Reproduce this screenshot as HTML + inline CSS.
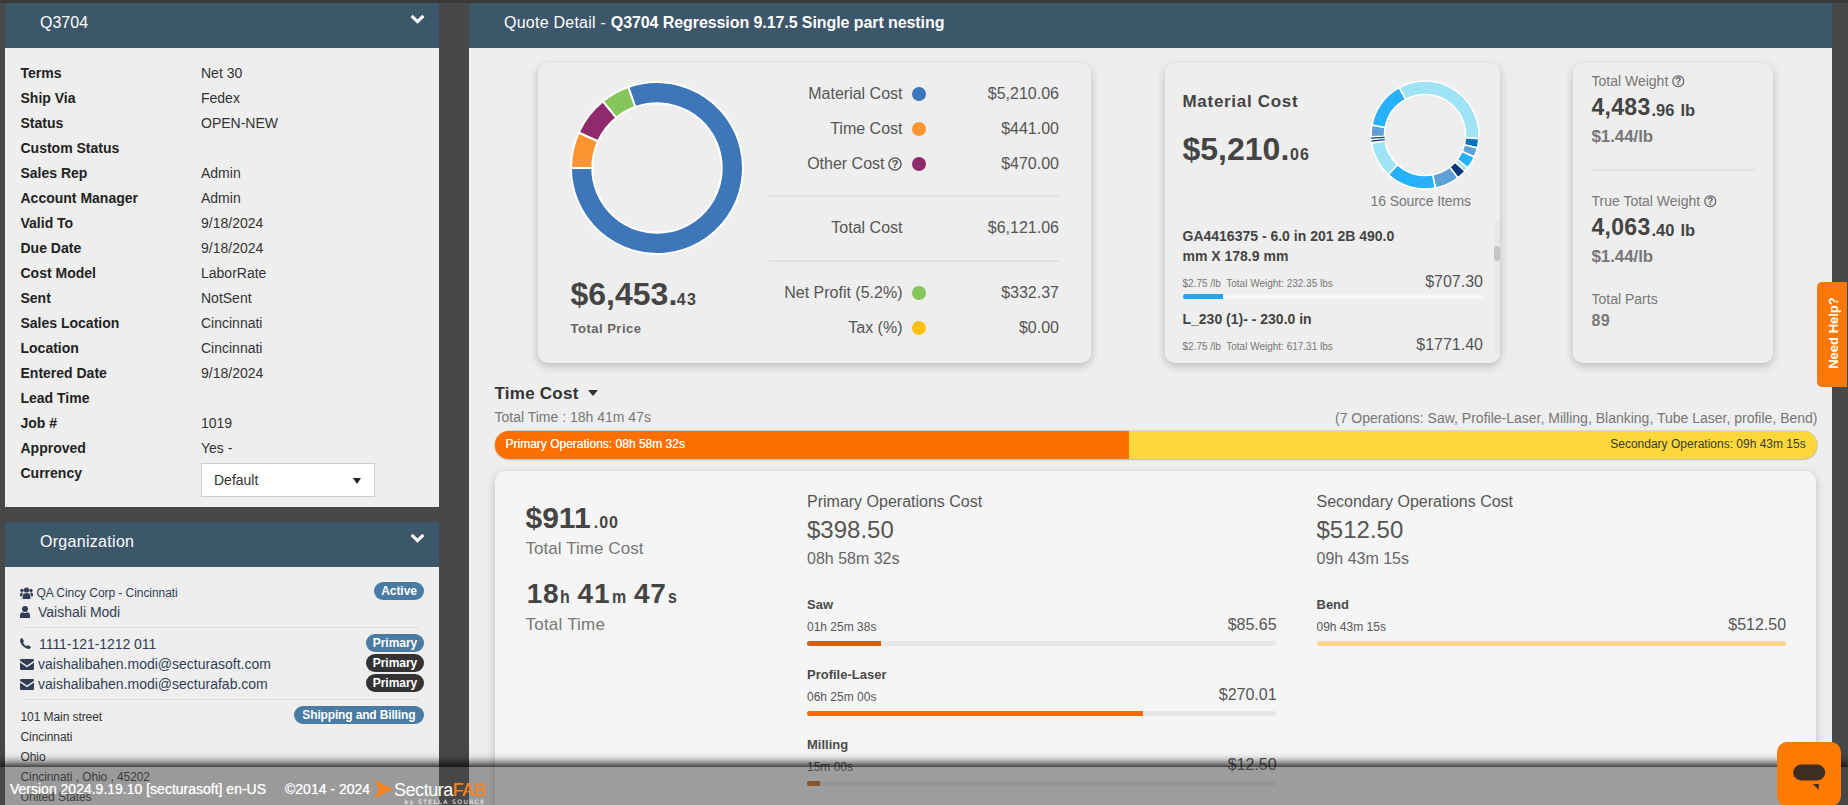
<!DOCTYPE html>
<html lang="en">
<head>
<meta charset="utf-8">
<title>Quote Detail - Q3704</title>
<style>
*{box-sizing:border-box;margin:0;padding:0}
html,body{width:1848px;height:805px;overflow:hidden}
body{background:#484848;font-family:"Liberation Sans",Arial,sans-serif;font-size:14px;color:#333;position:relative}
.abs{position:absolute}
#topstrip{position:absolute;left:0;top:0;width:1848px;height:3px;background:#3a3a3a}
.panel{position:absolute;background:#eee;overflow:hidden}
.phead{position:absolute;left:0;top:0;right:0;height:45px;background:#3c566a;color:#fff;font-size:16px;line-height:20px}
.phead .ttl{position:absolute;left:35px;top:10px;white-space:nowrap}
.chev{position:absolute;right:14px;top:11px;width:15px;height:10px}
/* left panel */
#lp{left:5px;top:3px;width:434px;height:504px}
#lp .row{position:absolute;left:0;width:434px;height:25px;font-size:14px;line-height:25px;white-space:nowrap}
#lp .row b{position:absolute;left:15.5px;top:0;font-size:14px;color:#222}
#lp .row span{position:absolute;left:196px;top:0;color:#333}
#cur{position:absolute;left:196px;top:460px;width:174px;height:34px;background:#fff;border:1px solid #ccc;font-size:14px;line-height:32px;padding-left:12px;color:#333}
#cur i{position:absolute;right:13px;top:14px;width:0;height:0;border-left:4px solid transparent;border-right:4px solid transparent;border-top:6px solid #222}
/* org panel */
#op{left:5px;top:522px;width:434px;height:283px}
.badge{position:absolute;height:17px;border-radius:9px;background:#4a7ba3;color:#fff;font-size:12px;font-weight:bold;line-height:17px;padding:0 6.8px;white-space:nowrap;letter-spacing:-.05px}
.badge.dk{background:#333}
.oline{position:absolute;white-space:nowrap;color:#2f3e55}
.hr{position:absolute;height:1px;background:#ddd}
/* main */
#mp{left:469px;top:3px;width:1363px;height:802px}
.card{position:absolute;background:#eee;border-radius:10px;box-shadow:0 3px 10px rgba(0,0,0,.22)}
.t{position:absolute;white-space:nowrap}
.r{text-align:right}
.dot{position:absolute;width:14px;height:14px;border-radius:50%}
#footer{position:absolute;left:0;top:766.5px;width:1848px;height:39px;background:rgba(70,70,70,.5);box-shadow:0 -1px 10px 2px rgba(0,0,0,1);color:#fff;font-size:14px;line-height:18px;z-index:50;text-shadow:0 0 1px rgba(255,255,255,.75)}
#logo{font-size:18px;line-height:24px;letter-spacing:-.45px;text-shadow:none}
#logosub{font-size:6px;line-height:7px;letter-spacing:1.42px;text-shadow:none;font-family:"DejaVu Sans","Liberation Sans",sans-serif}
#mc{position:absolute;left:-469px;top:-3px;width:1848px;height:805px}
.hr2{position:absolute;height:2px;background:#e2e2e2}
.pbar{position:absolute;border-radius:3px;overflow:hidden}
.pbar i{position:absolute;left:0;top:0;bottom:0;display:block}
#help{position:absolute;left:1817px;top:281.5px;width:30px;height:105px;background:#fc7805;border-radius:5px 0 0 5px;z-index:40}
#help span{position:absolute;left:-19.5px;top:43.5px;width:72px;height:16px;line-height:16px;text-align:center;transform:rotate(-90deg);color:#fff;font-weight:bold;font-size:13px;white-space:nowrap}
#chat{position:absolute;left:1777px;top:742px;width:64px;height:64px;border-radius:10px;background:#ff7a00;z-index:60}
</style>
</head>
<body>
<div id="topstrip"></div>

<!-- LEFT: quote info -->
<div class="panel" id="lp">
  <div class="phead"><span class="ttl">Q3704</span>
    <svg class="chev" viewBox="0 0 15 10"><path d="M1.6 1.9 L7.5 7.6 L13.4 1.9" fill="none" stroke="#fff" stroke-width="3.1"/></svg>
  </div>
  <div class="row" style="top:58px"><b>Terms</b><span>Net 30</span></div>
  <div class="row" style="top:83px"><b>Ship Via</b><span>Fedex</span></div>
  <div class="row" style="top:108px"><b>Status</b><span>OPEN-NEW</span></div>
  <div class="row" style="top:133px"><b>Custom Status</b><span></span></div>
  <div class="row" style="top:158px"><b>Sales Rep</b><span>Admin</span></div>
  <div class="row" style="top:183px"><b>Account Manager</b><span>Admin</span></div>
  <div class="row" style="top:208px"><b>Valid To</b><span>9/18/2024</span></div>
  <div class="row" style="top:233px"><b>Due Date</b><span>9/18/2024</span></div>
  <div class="row" style="top:258px"><b>Cost Model</b><span>LaborRate</span></div>
  <div class="row" style="top:283px"><b>Sent</b><span>NotSent</span></div>
  <div class="row" style="top:308px"><b>Sales Location</b><span>Cincinnati</span></div>
  <div class="row" style="top:333px"><b>Location</b><span>Cincinnati</span></div>
  <div class="row" style="top:358px"><b>Entered Date</b><span>9/18/2024</span></div>
  <div class="row" style="top:383px"><b>Lead Time</b><span></span></div>
  <div class="row" style="top:408px"><b>Job #</b><span>1019</span></div>
  <div class="row" style="top:433px"><b>Approved</b><span>Yes -</span></div>
  <div class="row" style="top:458px"><b>Currency</b></div>
  <div id="cur">Default<i></i></div>
</div>

<!-- LEFT: organization -->
<div class="panel" id="op">
  <div class="phead"><span class="ttl" style="letter-spacing:.3px">Organization</span>
    <svg class="chev" viewBox="0 0 15 10"><path d="M1.6 1.9 L7.5 7.6 L13.4 1.9" fill="none" stroke="#fff" stroke-width="3.1"/></svg>
  </div>
  <svg class="abs" style="left:15px;top:65px" width="13" height="12" viewBox="0 0 13 12"><g fill="#2f3e55"><circle cx="6.5" cy="3" r="2.6"/><circle cx="2" cy="3.4" r="1.7"/><circle cx="11" cy="3.4" r="1.7"/><path d="M2.6 12 L2.6 9.2 Q2.6 6.2 5 6.2 L8 6.2 Q10.4 6.2 10.4 9.2 L10.4 12 Z"/><path d="M0 9.2 L0 7.4 Q0 5.6 1.6 5.6 L3 5.6 Q2 6.8 2 9.2 Z"/><path d="M13 9.2 L13 7.4 Q13 5.6 11.4 5.6 L10 5.6 Q11 6.8 11 9.2 Z"/></g></svg>
  <div class="oline" style="left:31.5px;top:63px;font-size:12px;line-height:16px;letter-spacing:-.06px">QA Cincy Corp - Cincinnati</div>
  <div class="badge" style="left:369px;top:60px;height:18px;line-height:18px;padding:0 7.2px">Active</div>
  <svg class="abs" style="left:15px;top:84px" width="10" height="12" viewBox="0 0 10 12"><g fill="#2f3e55"><circle cx="5" cy="3" r="3"/><path d="M0 12 L0 9.6 Q0 6.4 2.6 6.2 Q5 7.6 7.4 6.2 Q10 6.4 10 9.6 L10 12 Z"/></g></svg>
  <div class="oline" style="left:33px;top:81px;font-size:14px;line-height:18px">Vaishali Modi</div>
  <div class="hr" style="left:20px;width:394px;top:105px"></div>
  <svg class="abs" style="left:15px;top:116px" width="11" height="11" viewBox="0 0 11 11"><path fill="#2f3e55" d="M2.3 0.3 L3.9 3 Q4 3.4 3.6 3.8 L2.9 4.5 Q4.2 7 6.6 8.2 L7.4 7.4 Q7.8 7.1 8.2 7.3 L10.7 8.8 Q11 9.1 10.8 9.5 Q10 11 8.4 11 Q4.6 10.6 1.6 6.6 Q-0.2 3.8 0.1 2.2 Q0.4 0.6 1.7 0.1 Q2.1 0 2.3 0.3 Z"/></svg>
  <div class="oline" style="left:34px;top:113px;font-size:14px;line-height:18px;letter-spacing:-.05px">1111-121-1212 011</div>
  <div class="badge" style="left:361px;top:112px;height:18px;line-height:18px">Primary</div>
  <svg class="abs" style="left:15px;top:137px" width="14" height="11" viewBox="0 0 14 11"><g fill="#2f3e55"><path d="M0 1.2 Q0 0 1.2 0 L12.8 0 Q14 0 14 1.2 L14 1.8 L7 6.6 L0 1.8 Z"/><path d="M0 3.4 L7 8.2 L14 3.4 L14 9.8 Q14 11 12.8 11 L1.2 11 Q0 11 0 9.8 Z"/></g></svg>
  <div class="oline" style="left:33px;top:133px;font-size:14px;line-height:18px">vaishalibahen.modi@secturasoft.com</div>
  <div class="badge dk" style="left:361px;top:132px;height:18px;line-height:18px">Primary</div>
  <svg class="abs" style="left:15px;top:157px" width="14" height="11" viewBox="0 0 14 11"><g fill="#2f3e55"><path d="M0 1.2 Q0 0 1.2 0 L12.8 0 Q14 0 14 1.2 L14 1.8 L7 6.6 L0 1.8 Z"/><path d="M0 3.4 L7 8.2 L14 3.4 L14 9.8 Q14 11 12.8 11 L1.2 11 Q0 11 0 9.8 Z"/></g></svg>
  <div class="oline" style="left:33px;top:153px;font-size:14px;line-height:18px">vaishalibahen.modi@secturafab.com</div>
  <div class="badge dk" style="left:361px;top:152px;height:18px;line-height:18px">Primary</div>
  <div class="hr" style="left:20px;width:394px;top:177px"></div>
  <div class="oline" style="left:15.5px;top:187px;font-size:12px;line-height:16px;letter-spacing:-.08px;color:#333">101 Main street</div>
  <div class="badge" style="left:289px;top:184px;height:18px;line-height:18px;padding:0 8.35px;letter-spacing:-.15px">Shipping and Billing</div>
  <div class="oline" style="left:15.5px;top:207px;font-size:12px;line-height:16px;letter-spacing:-.08px;color:#333">Cincinnati</div>
  <div class="oline" style="left:15.5px;top:227px;font-size:12px;line-height:16px;letter-spacing:-.08px;color:#333">Ohio</div>
  <div class="oline" style="left:15.5px;top:247px;font-size:12px;line-height:16px;letter-spacing:-.08px;color:#333">Cincinnati , Ohio , 45202</div>
  <div class="oline" style="left:15.5px;top:267px;font-size:12px;line-height:16px;letter-spacing:-.08px;color:#333">United States</div>
</div>

<!-- MAIN -->
<div class="panel" id="mp">
  <div class="phead"><span class="ttl" style="letter-spacing:.24px">Quote Detail - <b style="letter-spacing:-.08px">Q3704 Regression 9.17.5 Single part nesting</b></span></div>
<!--MAINSTART-->
<div id="mc">
<div class="card" style="left:538px;top:63px;width:553px;height:300px"></div>
<svg class="abs" style="left:569.4px;top:80px" width="176" height="176" viewBox="-88 -88 176 176">
<path d="M-28.85 -81.02 A86 86 0 1 1 -86.00 -0.15 L-64.70 -0.11 A64.7 64.7 0 1 0 -21.70 -60.95 Z" fill="#3d76b9" stroke="#fff" stroke-width="2" stroke-linejoin="round"/>
<path d="M-86.00 -0.15 A86 86 0 0 1 -78.32 -35.53 L-58.92 -26.73 A64.7 64.7 0 0 0 -64.70 -0.11 Z" fill="#fe9532" stroke="#fff" stroke-width="2" stroke-linejoin="round"/>
<path d="M-78.32 -35.53 A86 86 0 0 1 -54.12 -66.83 L-40.72 -50.28 A64.7 64.7 0 0 0 -58.92 -26.73 Z" fill="#8f2a6c" stroke="#fff" stroke-width="2" stroke-linejoin="round"/>
<path d="M-54.12 -66.83 A86 86 0 0 1 -28.85 -81.02 L-21.70 -60.95 A64.7 64.7 0 0 0 -40.72 -50.28 Z" fill="#85c559" stroke="#fff" stroke-width="2" stroke-linejoin="round"/>
</svg>
<div class="t" style="top:278.11px;font-size:32px;line-height:32px;color:#444;font-weight:bold;left:570.50px;">$6,453.</div>
<div class="t" style="top:291.66px;font-size:16px;line-height:16px;color:#444;font-weight:bold;left:676.80px;letter-spacing:1.2px;">43</div>
<div class="t" style="top:321.60px;font-size:13px;line-height:13px;color:#666;font-weight:bold;left:570.50px;letter-spacing:.5px;">Total Price</div>
<div class="t" style="top:85.66px;font-size:16px;line-height:16px;color:#555;right:945.50px;">Material Cost</div>
<div class="t" style="top:85.66px;font-size:16px;line-height:16px;color:#555;right:789.00px;">$5,210.06</div>
<div class="dot" style="left:911.8px;top:87.0px;background:#3d76b9"></div>
<div class="t" style="top:120.66px;font-size:16px;line-height:16px;color:#555;right:945.50px;">Time Cost</div>
<div class="t" style="top:120.66px;font-size:16px;line-height:16px;color:#555;right:789.00px;">$441.00</div>
<div class="dot" style="left:911.8px;top:122.0px;background:#fe9532"></div>
<div class="t" style="top:155.66px;font-size:16px;line-height:16px;color:#555;right:963.50px;">Other Cost</div>
<svg class="abs" style="left:888px;top:156.6px" width="14" height="14" viewBox="0 0 14 14"><circle cx="7" cy="7" r="6.1" fill="none" stroke="#555" stroke-width="1.4"/><text x="7" y="11" text-anchor="middle" font-family="Liberation Sans, sans-serif" font-weight="bold" font-size="11.5" fill="#555">?</text></svg>
<div class="t" style="top:155.66px;font-size:16px;line-height:16px;color:#555;right:789.00px;">$470.00</div>
<div class="dot" style="left:911.8px;top:157.0px;background:#8f2a6c"></div>
<div class="t" style="top:219.76px;font-size:16px;line-height:16px;color:#555;right:945.50px;">Total Cost</div>
<div class="t" style="top:219.76px;font-size:16px;line-height:16px;color:#555;right:789.00px;">$6,121.06</div>
<div class="t" style="top:284.86px;font-size:16px;line-height:16px;color:#555;right:945.50px;">Net Profit (5.2%)</div>
<div class="t" style="top:284.86px;font-size:16px;line-height:16px;color:#555;right:789.00px;">$332.37</div>
<div class="dot" style="left:911.8px;top:286.2px;background:#85c559"></div>
<div class="t" style="top:319.76px;font-size:16px;line-height:16px;color:#555;right:945.50px;">Tax (%)</div>
<div class="t" style="top:319.76px;font-size:16px;line-height:16px;color:#555;right:789.00px;">$0.00</div>
<div class="dot" style="left:911.8px;top:321.1px;background:#fdc010"></div>
<div class="hr2" style="left:769px;width:290px;top:195px"></div>
<div class="hr2" style="left:769px;width:290px;top:260px"></div>
<div class="card" style="left:1165px;top:63px;width:335px;height:300px"></div>
<div class="t" style="top:92.91px;font-size:17px;line-height:17px;color:#444;font-weight:bold;left:1182.50px;letter-spacing:.7px;">Material Cost</div>
<div class="t" style="top:133.11px;font-size:32px;line-height:32px;color:#444;font-weight:bold;left:1182.50px;">$5,210.</div>
<div class="t" style="top:146.66px;font-size:16px;line-height:16px;color:#444;font-weight:bold;left:1290.00px;letter-spacing:1.2px;">06</div>
<svg class="abs" style="left:1369px;top:79.30000000000001px" width="112" height="112" viewBox="-56 -56 112 112">
<path d="M-25.85 -47.41 A54 54 0 0 1 53.87 3.67 L40.41 2.75 A40.5 40.5 0 0 0 -19.39 -35.56 Z" fill="#9ee3f6" stroke="#fff" stroke-width="1.6" stroke-linejoin="round"/>
<path d="M53.87 3.67 A54 54 0 0 1 52.40 13.06 L39.30 9.80 A40.5 40.5 0 0 0 40.41 2.75 Z" fill="#0373bb" stroke="#fff" stroke-width="1.6" stroke-linejoin="round"/>
<path d="M52.40 13.06 A54 54 0 0 1 49.33 21.96 L37.00 16.47 A40.5 40.5 0 0 0 39.30 9.80 Z" fill="#5da1d9" stroke="#fff" stroke-width="1.6" stroke-linejoin="round"/>
<path d="M49.33 21.96 A54 54 0 0 1 42.90 32.80 L32.17 24.60 A40.5 40.5 0 0 0 37.00 16.47 Z" fill="#27b0fb" stroke="#fff" stroke-width="1.6" stroke-linejoin="round"/>
<path d="M42.90 32.80 A54 54 0 0 1 40.00 36.27 L30.00 27.20 A40.5 40.5 0 0 0 32.17 24.60 Z" fill="#9ee3f6" stroke="#fff" stroke-width="1.6" stroke-linejoin="round"/>
<path d="M40.00 36.27 A54 54 0 0 1 32.87 42.84 L24.65 32.13 A40.5 40.5 0 0 0 30.00 27.20 Z" fill="#05387a" stroke="#fff" stroke-width="1.6" stroke-linejoin="round"/>
<path d="M32.87 42.84 A54 54 0 0 1 10.30 53.01 L7.73 39.76 A40.5 40.5 0 0 0 24.65 32.13 Z" fill="#5da1d9" stroke="#fff" stroke-width="1.6" stroke-linejoin="round"/>
<path d="M10.30 53.01 A54 54 0 0 1 -36.76 39.56 L-27.57 29.67 A40.5 40.5 0 0 0 7.73 39.76 Z" fill="#27b0fb" stroke="#fff" stroke-width="1.6" stroke-linejoin="round"/>
<path d="M-36.76 39.56 A54 54 0 0 1 -53.42 7.89 L-40.07 5.92 A40.5 40.5 0 0 0 -27.57 29.67 Z" fill="#9ee3f6" stroke="#fff" stroke-width="1.6" stroke-linejoin="round"/>
<path d="M-53.42 7.89 A54 54 0 0 1 -53.97 1.70 L-40.48 1.27 A40.5 40.5 0 0 0 -40.07 5.92 Z" fill="#fff" stroke="#fff" stroke-width="1.6" stroke-linejoin="round"/>
<path d="M-53.97 1.70 A54 54 0 0 1 -53.08 -9.93 L-39.81 -7.45 A40.5 40.5 0 0 0 -40.48 1.27 Z" fill="#5da1d9" stroke="#fff" stroke-width="1.6" stroke-linejoin="round"/>
<path d="M-53.08 -9.93 A54 54 0 0 1 -25.85 -47.41 L-19.39 -35.56 A40.5 40.5 0 0 0 -39.81 -7.45 Z" fill="#27b0fb" stroke="#fff" stroke-width="1.6" stroke-linejoin="round"/>
<path d="M-40.23 4.65 L-53.64 6.21" stroke="#05387a" stroke-width="1.3" fill="none"/>
<path d="M-40.43 2.40 L-53.90 3.20" stroke="#05387a" stroke-width="1.3" fill="none"/>
</svg>
<div class="t" style="top:194.35px;font-size:14px;line-height:14px;color:#777;left:1370.50px;letter-spacing:-.1px;">16 Source Items</div>
<div class="t" style="top:229.35px;font-size:14px;line-height:14px;color:#444;font-weight:bold;left:1182.50px;">GA4416375 - 6.0 in 201 2B 490.0</div>
<div class="t" style="top:249.35px;font-size:14px;line-height:14px;color:#444;font-weight:bold;left:1182.50px;">mm X 178.9 mm</div>
<div class="t" style="top:278.54px;font-size:10px;line-height:10px;color:#777;left:1182.50px;">$2.75 /lb&nbsp; Total Weight: 232.35 lbs</div>
<div class="t" style="top:274.26px;font-size:16px;line-height:16px;color:#555;right:365.00px;">$707.30</div>
<div class="pbar" style="left:1183px;top:294.2px;width:299.5px;height:4.5px;background:#f6f6f6"><i style="width:40px;background:#1ea7f5"></i></div>
<div class="t" style="top:312.45px;font-size:14px;line-height:14px;color:#444;font-weight:bold;left:1182.50px;">L_230 (1)- - 230.0 in</div>
<div class="t" style="top:341.64px;font-size:10px;line-height:10px;color:#777;left:1182.50px;">$2.75 /lb&nbsp; Total Weight: 617.31 lbs</div>
<div class="t" style="top:337.06px;font-size:16px;line-height:16px;color:#555;right:365.00px;">$1771.40</div>
<div class="abs" style="left:1493.5px;top:221px;width:6.5px;height:134px;background:#e8e8e8"></div>
<div class="abs" style="left:1493.5px;top:246px;width:6px;height:15px;background:#c4c4c4;border-radius:3px"></div>
<div class="card" style="left:1573px;top:63px;width:200px;height:300px"></div>
<div class="t" style="top:74.35px;font-size:14px;line-height:14px;color:#777;left:1591.50px;">Total Weight</div>
<svg class="abs" style="left:1672px;top:75px" width="12.5" height="12.5" viewBox="0 0 14 14"><circle cx="7" cy="7" r="6.1" fill="none" stroke="#666" stroke-width="1.4"/><text x="7" y="11" text-anchor="middle" font-family="Liberation Sans, sans-serif" font-weight="bold" font-size="11.5" fill="#666">?</text></svg>
<div class="t" style="top:96.13px;font-size:23px;line-height:23px;color:#444;font-weight:bold;left:1591.50px;letter-spacing:.3px;">4,483</div>
<div class="t" style="top:101.63px;font-size:16.5px;line-height:16.5px;color:#444;font-weight:bold;left:1651.50px;word-spacing:1.5px;">.96 lb</div>
<div class="t" style="top:127.51px;font-size:17px;line-height:17px;color:#777;font-weight:bold;left:1591.50px;letter-spacing:-.1px;">$1.44/lb</div>
<div class="hr2" style="left:1591px;width:164px;top:169px"></div>
<div class="t" style="top:194.35px;font-size:14px;line-height:14px;color:#777;left:1591.50px;">True Total Weight</div>
<svg class="abs" style="left:1704px;top:195px" width="12.5" height="12.5" viewBox="0 0 14 14"><circle cx="7" cy="7" r="6.1" fill="none" stroke="#666" stroke-width="1.4"/><text x="7" y="11" text-anchor="middle" font-family="Liberation Sans, sans-serif" font-weight="bold" font-size="11.5" fill="#666">?</text></svg>
<div class="t" style="top:216.13px;font-size:23px;line-height:23px;color:#444;font-weight:bold;left:1591.50px;letter-spacing:.3px;">4,063</div>
<div class="t" style="top:221.63px;font-size:16.5px;line-height:16.5px;color:#444;font-weight:bold;left:1651.50px;word-spacing:1.5px;">.40 lb</div>
<div class="t" style="top:248.21px;font-size:17px;line-height:17px;color:#777;font-weight:bold;left:1591.50px;letter-spacing:-.1px;">$1.44/lb</div>
<div class="t" style="top:292.15px;font-size:14px;line-height:14px;color:#777;left:1591.50px;">Total Parts</div>
<div class="t" style="top:313.46px;font-size:16px;line-height:16px;color:#777;font-weight:bold;left:1591.50px;letter-spacing:.3px;">89</div>
<div class="t" style="top:384.81px;font-size:17px;line-height:17px;color:#333;font-weight:bold;left:494.50px;letter-spacing:.25px;">Time Cost</div>
<div class="abs" style="left:588.3px;top:390px;width:0;height:0;border-left:5.2px solid transparent;border-right:5.2px solid transparent;border-top:6px solid #333"></div>
<div class="t" style="top:410.15px;font-size:14px;line-height:14px;color:#777;left:494.50px;">Total Time : 18h 41m 47s</div>
<div class="t" style="top:411.15px;font-size:14px;line-height:14px;color:#777;right:30.50px;">(7 Operations: Saw, Profile-Laser, Milling, Blanking, Tube Laser, profile, Bend)</div>
<div class="abs" style="left:495px;top:430.5px;width:1321.5px;height:28.5px;border-radius:14.25px;overflow:hidden;background:#fdd83b;box-shadow:0 0 0 .6px rgba(0,0,0,.18),0 1px 2px rgba(0,0,0,.15)"><div style="position:absolute;left:0;top:0;bottom:0;width:634px;background:#fd6f03"></div></div>
<div class="t" style="top:438.04px;font-size:12px;line-height:12px;color:#fff;left:505.50px;text-shadow:0 0 .6px #fff;">Primary Operations: 08h 58m 32s</div>
<div class="t" style="top:438.04px;font-size:12px;line-height:12px;color:#3a3a32;right:42.30px;">Secondary Operations: 09h 43m 15s</div>
<div class="card" style="left:495px;top:471px;width:1321px;height:360px;background:#f5f5f5"></div>
<div class="t" style="top:502.81px;font-size:30px;line-height:30px;color:#444;font-weight:bold;left:525.50px;">$911</div>
<div class="t" style="top:514.66px;font-size:16px;line-height:16px;color:#444;font-weight:bold;left:593.80px;letter-spacing:.9px;">.00</div>
<div class="t" style="top:539.51px;font-size:17px;line-height:17px;color:#777;left:525.50px;letter-spacing:.06px;">Total Time Cost</div>
<div class="t" style="top:579.80px;font-size:28px;line-height:28px;color:#444;font-weight:bold;left:526.70px;letter-spacing:.8px;">18</div>
<div class="t" style="top:587.42px;font-size:19px;line-height:19px;color:#444;font-weight:bold;left:559.60px;transform:scaleX(.84);transform-origin:0 0;">h</div>
<div class="t" style="top:579.80px;font-size:28px;line-height:28px;color:#444;font-weight:bold;left:577.60px;letter-spacing:.8px;">41</div>
<div class="t" style="top:587.42px;font-size:19px;line-height:19px;color:#444;font-weight:bold;left:611.70px;transform:scaleX(.84);transform-origin:0 0;">m</div>
<div class="t" style="top:579.80px;font-size:28px;line-height:28px;color:#444;font-weight:bold;left:634.00px;letter-spacing:.8px;">47</div>
<div class="t" style="top:587.42px;font-size:19px;line-height:19px;color:#444;font-weight:bold;left:668.00px;transform:scaleX(.84);transform-origin:0 0;">s</div>
<div class="t" style="top:615.61px;font-size:17px;line-height:17px;color:#777;left:525.50px;letter-spacing:.22px;">Total Time</div>
<div class="t" style="top:494.46px;font-size:16px;line-height:16px;color:#555;left:807.00px;">Primary Operations Cost</div>
<div class="t" style="top:518.18px;font-size:24px;line-height:24px;color:#555;left:807.00px;">$398.50</div>
<div class="t" style="top:550.66px;font-size:16px;line-height:16px;color:#666;left:807.00px;">08h 58m 32s</div>
<div class="t" style="top:598.20px;font-size:13px;line-height:13px;color:#4a4a4a;font-weight:bold;left:807.00px;">Saw</div>
<div class="t" style="top:620.64px;font-size:12px;line-height:12px;color:#555;left:807.00px;">01h 25m 38s</div>
<div class="t" style="top:616.86px;font-size:16px;line-height:16px;color:#555;right:571.40px;">$85.65</div>
<div class="pbar" style="left:807px;top:641px;width:469px;height:5px;background:#e6e6e6"><i style="width:74px;background:#cf600a"></i></div>
<div class="t" style="top:668.20px;font-size:13px;line-height:13px;color:#4a4a4a;font-weight:bold;left:807.00px;">Profile-Laser</div>
<div class="t" style="top:690.64px;font-size:12px;line-height:12px;color:#555;left:807.00px;">06h 25m 00s</div>
<div class="t" style="top:686.86px;font-size:16px;line-height:16px;color:#555;right:571.40px;">$270.01</div>
<div class="pbar" style="left:807px;top:711px;width:469px;height:5px;background:#e6e6e6"><i style="width:336px;background:#fa6b0b"></i></div>
<div class="t" style="top:738.20px;font-size:13px;line-height:13px;color:#4a4a4a;font-weight:bold;left:807.00px;">Milling</div>
<div class="t" style="top:760.64px;font-size:12px;line-height:12px;color:#555;left:807.00px;">15m 00s</div>
<div class="t" style="top:756.86px;font-size:16px;line-height:16px;color:#555;right:571.40px;">$12.50</div>
<div class="pbar" style="left:807px;top:781px;width:469px;height:5px;background:#e6e6e6"><i style="width:13px;background:#cf600a"></i></div>
<div class="t" style="top:494.46px;font-size:16px;line-height:16px;color:#555;left:1316.50px;">Secondary Operations Cost</div>
<div class="t" style="top:518.18px;font-size:24px;line-height:24px;color:#555;left:1316.50px;">$512.50</div>
<div class="t" style="top:550.66px;font-size:16px;line-height:16px;color:#666;left:1316.50px;">09h 43m 15s</div>
<div class="t" style="top:598.20px;font-size:13px;line-height:13px;color:#4a4a4a;font-weight:bold;left:1316.50px;">Bend</div>
<div class="t" style="top:620.64px;font-size:12px;line-height:12px;color:#555;left:1316.50px;">09h 43m 15s</div>
<div class="t" style="top:616.86px;font-size:16px;line-height:16px;color:#555;right:61.90px;">$512.50</div>
<div class="pbar" style="left:1316.5px;top:641px;width:469.0px;height:5px;background:#e6e6e6"><i style="width:469.5px;background:#fdd58a"></i></div>
</div>
<!--MAINEND-->
</div>


<div id="help"><span>Need Help?</span></div>
<div id="chat"><svg width="64" height="64" viewBox="0 0 64 64"><rect x="16.2" y="22.6" width="32" height="15.8" rx="7.9" fill="#3f2e22"/><path d="M35.8 42 L41.8 42 L41.8 48 Z" fill="#3f2e22"/></svg></div>
<!-- FOOTER -->
<div id="footer">
  <span class="t" style="left:10px;top:13.2px">Version 2024.9.19.10 [secturasoft] en-US</span>
  <span class="t" style="left:285px;top:13.2px">&copy;2014 - 2024</span>
  <svg class="abs" style="left:374px;top:13px" width="20" height="19" viewBox="0 0 20 19"><path d="M0 0 L19 9 L0 18.5 L5 9 Z" fill="#f5821f"/></svg>
  <span class="t" id="logo" style="left:394px;top:11px">Sectura<span style="color:#f5821f;font-size:17.5px;letter-spacing:0;text-shadow:0 0 .7px #f5821f">FAB</span></span>
  <span class="t" id="logosub" style="left:404.5px;top:31.5px">by STELLA SOURCE</span>
</div>
</body>
</html>
